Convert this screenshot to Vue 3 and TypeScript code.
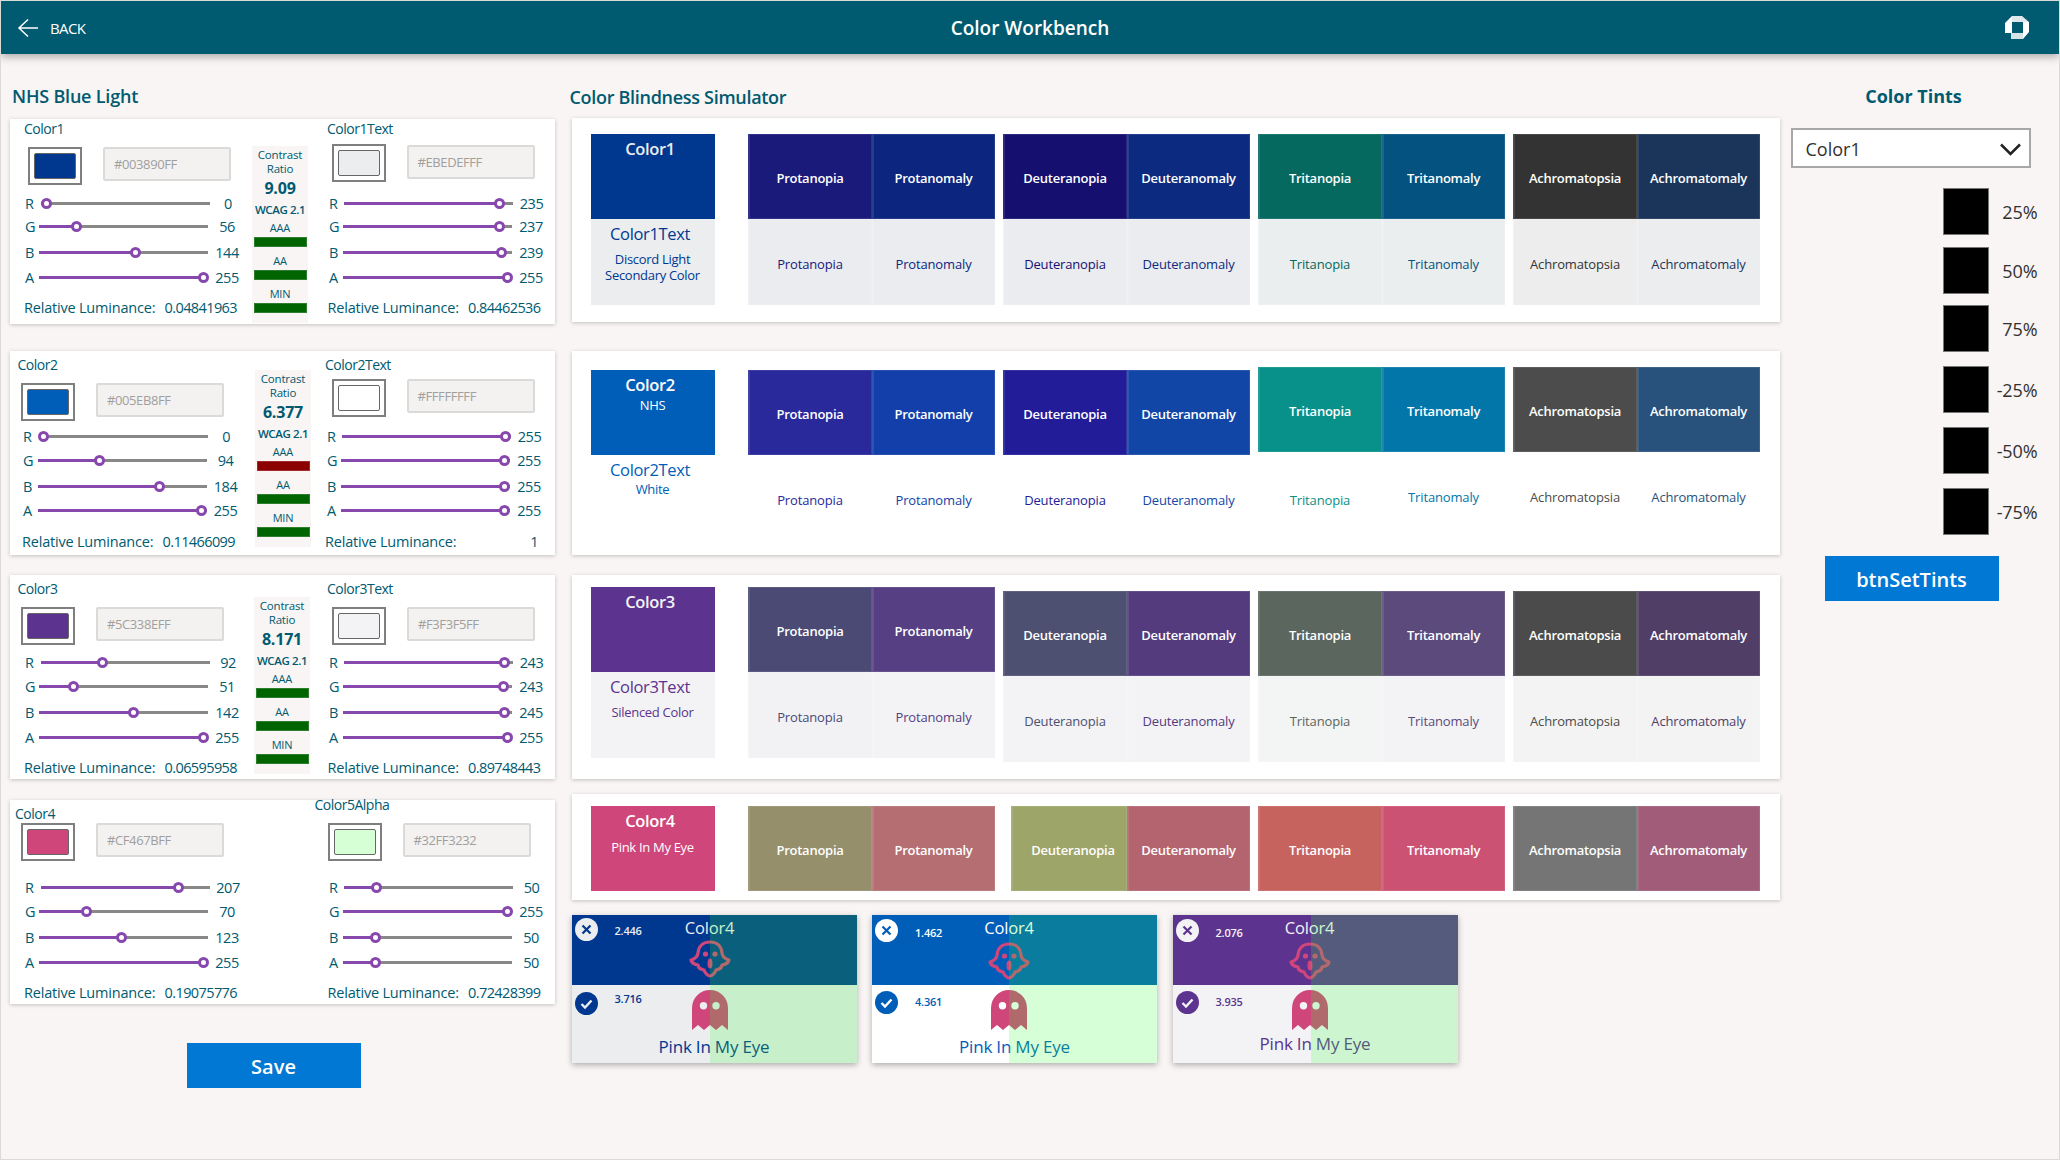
<script setup lang="ts">
interface Slider {
  l: string
  v: number
  t: number
}

interface Editor {
  cls: string
  name: string
  hex: string
  fill: string
  lum: string
  sliders: Slider[]
}

interface Contrast {
  cls: string
  ratio: string
  aaa: boolean
}

interface ColorCard {
  left: Editor
  right: Editor
  contrast?: Contrast
}

function sl(vals: number[], pos: number[]): Slider[] {
  return ['R', 'G', 'B', 'A'].map((l, i) => ({ l, v: vals[i], t: pos[i] }))
}

const colorCards: ColorCard[] = [
  {
    left: { cls: 'ed-1l', name: 'Color1', hex: '#003890FF', fill: '#003890', lum: '0.04841963', sliders: sl([0, 56, 144, 255], [5, 37, 96, 164.5]) },
    right: { cls: 'ed-1r', name: 'Color1Text', hex: '#EBEDEFFF', fill: '#ebedef', lum: '0.84462536', sliders: sl([235, 237, 239, 255], [155.5, 156.5, 158.5, 164]) },
    contrast: { cls: 'cr-1', ratio: '9.09', aaa: true }
  },
  {
    left: { cls: 'ed-2l', name: 'Color2', hex: '#005EB8FF', fill: '#005eb8', lum: '0.11466099', sliders: sl([0, 94, 184, 255], [4.5, 62, 122, 163.5]) },
    right: { cls: 'ed-2r', name: 'Color2Text', hex: '#FFFFFFFF', fill: '#ffffff', lum: '1', sliders: sl([255, 255, 255, 255], [163.5, 163.5, 163.5, 163.5]) },
    contrast: { cls: 'cr-2', ratio: '6.377', aaa: false }
  },
  {
    left: { cls: 'ed-3l', name: 'Color3', hex: '#5C338EFF', fill: '#5c338e', lum: '0.06595958', sliders: sl([92, 51, 142, 255], [61, 34, 94, 164.5]) },
    right: { cls: 'ed-3r', name: 'Color3Text', hex: '#F3F3F5FF', fill: '#f3f3f5', lum: '0.89748443', sliders: sl([243, 243, 245, 255], [160.5, 160.5, 161.5, 164]) },
    contrast: { cls: 'cr-3', ratio: '8.171', aaa: true }
  },
  {
    left: { cls: 'ed-4l', name: 'Color4', hex: '#CF467BFF', fill: '#cf467b', lum: '0.19075776', sliders: sl([207, 70, 123, 255], [137, 47, 82, 164.5]) },
    right: { cls: 'ed-4r', name: 'Color5Alpha', hex: '#32FF3232', fill: '#d6ffd6', lum: '0.72428399', sliders: sl([50, 255, 50, 50], [32, 164, 32, 32]) }
  }
]

interface SimGroup {
  names: [string, string]
  top: [string, string]
  bottom?: [string, string]
  cls?: string
  shiftFirst?: boolean
}

interface SimRow {
  cls: string
  title: string
  titleBg: string
  titleColor: string
  titleSub?: string
  sub?: string
  lower?: string
  lowerColor?: string
  tight?: boolean
  groups: SimGroup[]
}

const N1: [string, string] = ['Protanopia', 'Protanomaly']
const N2: [string, string] = ['Deuteranopia', 'Deuteranomaly']
const N3: [string, string] = ['Tritanopia', 'Tritanomaly']
const N4: [string, string] = ['Achromatopsia', 'Achromatomaly']

const simRows: SimRow[] = [
  {
    cls: 'sim-1', title: 'Color1', titleBg: '#003890', titleColor: '#ebedef',
    lower: 'Color1Text', lowerColor: '#ebedef', sub: 'Discord Light Secondary Color',
    groups: [
      { names: N1, top: ['#1a1a7a', '#0c2680'], bottom: ['#ebecef', '#ebecef'] },
      { names: N2, top: ['#15106f', '#0c2b80'], bottom: ['#ebecef', '#ebecef'] },
      { names: N3, top: ['#056960', '#045280'], bottom: ['#ebeeef', '#ebeeef'] },
      { names: N4, top: ['#333333', '#1b345a'], bottom: ['#ededed', '#ecedee'] }
    ]
  },
  {
    cls: 'sim-2', title: 'Color2', titleSub: 'NHS', titleBg: '#005eb8', titleColor: '#ffffff',
    lower: 'Color2Text', lowerColor: '#ffffff', sub: 'White', tight: true,
    groups: [
      { cls: 'g-down3', names: N1, top: ['#29299b', '#123fa9'], bottom: ['#ffffff', '#ffffff'] },
      { cls: 'g-down3', names: N2, top: ['#221c98', '#1146a6'], bottom: ['#ffffff', '#ffffff'] },
      { names: N3, top: ['#08908a', '#0276a8'], bottom: ['#ffffff', '#ffffff'], shiftFirst: true },
      { names: N4, top: ['#4c4c4c', '#28527b'], bottom: ['#ffffff', '#ffffff'] }
    ]
  },
  {
    cls: 'sim-3', title: 'Color3', titleBg: '#5c338e', titleColor: '#f3f3f5',
    lower: 'Color3Text', lowerColor: '#f3f3f5', sub: 'Silenced Color',
    groups: [
      { names: N1, top: ['#4a4a75', '#563f82'], bottom: ['#f2f2f5', '#f3f3f5'] },
      { cls: 'g-down4', names: N2, top: ['#4d5070', '#533b7e'], bottom: ['#f3f3f5', '#f3f3f5'] },
      { cls: 'g-down4', names: N3, top: ['#5b665f', '#5c4a7c'], bottom: ['#f3f4f4', '#f3f3f5'] },
      { cls: 'g-down4', names: N4, top: ['#4b4b4b', '#503e66'], bottom: ['#f3f3f3', '#f3f3f4'] }
    ]
  },
  {
    cls: 'sim-4', title: 'Color4', titleSub: 'Pink In My Eye', titleBg: '#cf467b', titleColor: '#ffffff',
    groups: [
      { names: N1, top: ['#968f6b', '#b56f72'] },
      { cls: 'g-narrow', names: N2, top: ['#9ea569', '#b4646f'] },
      { names: N3, top: ['#c7635f', '#cc5273'] },
      { names: N4, top: ['#757575', '#a05c78'] }
    ]
  }
]

const tiles = [
  { cls: 'tile-1', top: '#003890', bottom: '#ebedef', fail: '2.446', pass: '3.716' },
  { cls: 'tile-2', top: '#005eb8', bottom: '#ffffff', fail: '1.462', pass: '4.361' },
  { cls: 'tile-3', top: '#5c338e', bottom: '#f3f3f5', fail: '2.076', pass: '3.935' }
]

const tints = ['25%', '50%', '75%', '-25%', '-50%', '-75%']
const wcagLevels = ['AAA', 'AA', 'MIN']
</script>

<template>
  <div class="app">
    <header class="topbar">
      <div class="back">
        <svg width="22" height="20" viewBox="0 0 22 20" fill="none" stroke="#fff" stroke-width="1.5">
          <path d="M21 10H2M11 1.5 2 10l9 8.5" />
        </svg>
        <span>BACK</span>
      </div>
      <div class="topbar-title">Color Workbench</div>
      <div class="topbar-end">
        <svg width="24" height="23" viewBox="0 0 24 23">
          <polygon points="0,7 7,0 7,17 0,17" fill="#fff" />
          <polygon points="7,0 17,0 24,6 7,6" fill="#dfe9ec" />
          <polygon points="18,6 24,6 24,16 18,23" fill="#fff" />
          <polygon points="6,17 18,17 18,23 6,23" fill="#d5e2e6" />
        </svg>
      </div>
    </header>

    <main class="body">
      <section class="col-left">
        <h2 class="heading">NHS Blue Light</h2>
        <div v-for="card in colorCards" :key="card.left.name" class="color-card">
          <template v-for="(ed, i) in [card.left, card.right]" :key="ed.name">
            <div v-if="i === 1" class="contrast" :class="card.contrast?.cls">
              <template v-if="card.contrast">
                <div class="cr-head">Contrast<br />Ratio</div>
                <div class="cr-num">{{ card.contrast.ratio }}</div>
                <div class="cr-wcag">WCAG 2.1</div>
                <template v-for="level in wcagLevels" :key="level">
                  <div class="cr-level">{{ level }}</div>
                  <div class="cr-bar" :class="{ 'cr-bar--fail': level === 'AAA' && !card.contrast.aaa }"></div>
                </template>
              </template>
            </div>
            <div class="editor" :class="ed.cls">
              <div class="ed-label">{{ ed.name }}</div>
              <div class="ed-top">
                <div class="swatch">
                  <div class="swatch-fill" :style="{ background: ed.fill }"></div>
                </div>
                <div class="hex">{{ ed.hex }}</div>
              </div>
              <div class="ed-rows">
                <div v-for="s in ed.sliders" :key="s.l" class="row">
                  <span class="row-letter">{{ s.l }}</span>
                  <div class="track">
                    <div class="track-fill" :style="{ width: s.t + 'px' }"></div>
                    <div class="thumb" :style="{ left: s.t + 'px' }"></div>
                  </div>
                  <span class="row-val">{{ s.v }}</span>
                </div>
              </div>
              <div class="lum">
                <span class="lum-label">Relative Luminance:</span>
                <span class="lum-val">{{ ed.lum }}</span>
              </div>
            </div>
          </template>
        </div>
        <button class="btn btn-save">Save</button>
      </section>

      <section class="col-mid">
        <h2 class="heading heading-mid">Color Blindness Simulator</h2>
        <div v-for="row in simRows" :key="row.title" class="sim-card" :class="row.cls">
          <div class="name-block g-first" :class="{ tight: row.tight }">
            <div class="name-top" :style="{ background: row.titleBg, color: row.titleColor }">
              <div class="name-title">{{ row.title }}</div>
              <div v-if="row.titleSub" class="name-sub name-sub--top">{{ row.titleSub }}</div>
            </div>
            <div v-if="row.lower" class="name-bottom" :style="{ background: row.lowerColor, color: row.titleBg }">
              <div class="name-title">{{ row.lower }}</div>
              <div class="name-sub name-sub--bottom">{{ row.sub }}</div>
            </div>
          </div>
          <div class="groups">
            <div v-for="g in row.groups" :key="g.names[0]" class="group" :class="g.cls">
              <div
                v-for="(n, i) in g.names"
                :key="n"
                class="cell cell-top"
                :style="{ background: g.top[i] }"
              >{{ n }}</div>
              <template v-if="g.bottom">
                <div
                  v-for="(n, i) in g.names"
                  :key="n + 'b'"
                  class="cell cell-bottom"
                  :class="{ 'cell--shift': g.shiftFirst && i === 0 }"
                  :style="{ background: g.bottom[i], color: g.top[i] }"
                >{{ n }}</div>
              </template>
            </div>
          </div>
        </div>

        <div class="tiles">
          <div v-for="t in tiles" :key="t.cls" class="tile" :class="t.cls">
            <div class="tile-half tile-top" :style="{ background: t.top, color: t.bottom }">
              <div class="tile-side">
                <svg class="mark" width="23" height="23" viewBox="0 0 23 23" fill="none">
                  <circle cx="11.5" cy="11.5" r="11.5" :fill="t.bottom" />
                  <path d="M7.5 7.5l8 8M15.5 7.5l-8 8" :stroke="t.top" stroke-width="2.2" />
                </svg>
                <span class="tile-num">{{ t.fail }}</span>
              </div>
              <div class="tile-mid">
                <div class="tile-name">Color4</div>
                <svg class="ghost-line" width="42" height="38" viewBox="0 0 42 38" fill="none">
                  <path
                    d="M21 2C13 2 9.5 7 9 13c-.4 4-3.5 6-7 7 1 4 4.5 4.5 7 5 .3 3.5 3.5 4.5 6 5 1 3 4 6 6 6s5-3 6-6c2.5-.5 5.7-1.5 6-5 2.5-.5 6-1 7-5-3.5-1-6.6-3-7-7-.5-6-4-11-12-11Z"
                    stroke="#cf467b"
                    stroke-width="3.2"
                    stroke-linejoin="round"
                  />
                  <circle cx="16.5" cy="14" r="2.6" fill="#cf467b" />
                  <circle cx="26" cy="14" r="2.6" fill="#cf467b" />
                  <ellipse cx="21" cy="23.5" rx="2.5" ry="5" fill="#cf467b" />
                </svg>
              </div>
            </div>
            <div class="tile-half tile-bottom" :style="{ background: t.bottom, color: t.top }">
              <div class="tile-side">
                <svg class="mark" width="23" height="23" viewBox="0 0 23 23" fill="none">
                  <circle cx="11.5" cy="11.5" r="11.5" :fill="t.top" />
                  <path d="M6.5 12l3.5 3.5 6.5-7" :stroke="t.bottom" stroke-width="2.4" />
                </svg>
                <span class="tile-num">{{ t.pass }}</span>
              </div>
              <div class="tile-mid">
                <svg class="ghost-solid" width="36" height="40" viewBox="0 0 36 40">
                  <path
                    fill-rule="evenodd"
                    fill="#cf467b"
                    d="M0 18a18 18 0 0 1 36 0v22l-6-5-6 5-6-5-6 5-6-5-6 5ZM11.5 12a3.7 3.7 0 1 0 0 7.4 3.7 3.7 0 0 0 0-7.4ZM24 12a3.7 3.7 0 1 0 0 7.4A3.7 3.7 0 0 0 24 12Z"
                  />
                </svg>
              </div>
              <div class="tile-caption">Pink In My Eye</div>
            </div>
            <div class="tile-veil"></div>
          </div>
        </div>
      </section>

      <aside class="col-right">
        <h2 class="heading heading-tints">Color Tints</h2>
        <div class="dropdown">
          <span>Color1</span>
          <svg width="21" height="13" viewBox="0 0 21 13" fill="none" stroke="#222" stroke-width="2.5">
            <path d="M1 1.5 10.5 11 20 1.5" />
          </svg>
        </div>
        <div class="tint-list">
          <div v-for="t in tints" :key="t" class="tint">
            <div class="tint-box"></div>
            <span class="tint-label">{{ t }}</span>
          </div>
        </div>
        <button class="btn btn-tints">btnSetTints</button>
      </aside>
    </main>
  </div>
</template>

<style scoped>
.app {
  width: 2060px;
  height: 1160px;
  box-sizing: border-box;
  border: 1px solid #dcdad8;
  background: #f8f5f4;
  font-family: "Open Sans", "Noto Sans", sans-serif;
  color: #005a70;
  overflow: hidden;
}

.topbar {
  height: 53px;
  background: #005a70;
  box-shadow: 0 3px 8px rgba(0, 0, 0, 0.3);
  display: grid;
  grid-template-columns: 1fr auto 1fr;
  align-items: center;
  color: #fff;
  position: relative;
}

.back {
  display: flex;
  align-items: center;
  gap: 11px;
  padding-left: 16px;
  font-size: 15px;
  letter-spacing: -0.6px;
}

.topbar-title {
  font-size: 19px;
  font-weight: 600;
}

.topbar-end {
  display: flex;
  justify-content: flex-end;
  padding-right: 30px;
}

.body {
  display: flex;
  align-items: flex-start;
}

.heading {
  margin: 0;
  font-size: 18px;
  line-height: 24px;
  font-weight: 600;
  color: #005a70;
  letter-spacing: -0.3px;
}

.col-left {
  width: 545px;
  margin-left: 9px;
  padding-top: 30px;
}

.col-left .heading {
  padding-left: 2px;
  margin-bottom: 11px;
  letter-spacing: -0.2px;
}

.color-card {
  display: flex;
  height: 204px;
  background: #fff;
  box-shadow: 0 1px 4px rgba(0, 0, 0, 0.22);
  margin-bottom: 20px;
}

.color-card:nth-of-type(1) {
  height: 205px;
  margin-bottom: 27px;
}

.color-card:nth-of-type(3) {
  margin-bottom: 21px;
}

/* per editor offsets: the original canvas is not quite aligned */
.editor {
  --lx: 14px;
  --ly: 14px;
  --sx: 11px;
  --sy: 32px;
  --hex-gap: 21px;
  --hex-dy: 0px;
  --rx: 15px;
  --tx: 29px;
  --tx1: 31px;
  --vx: 216px;
  --r1: 87px;
  --g2: 24px;
  --g4: 25px;
  --lumy: 193px;
  --r4: 162px;
  --lumx: 14px;
  position: relative;
  display: flex;
  flex-direction: column;
  width: 242px;
}

.ed-1r,
.ed-2r,
.ed-3r,
.ed-4r {
  width: 247px;
}

.ed-1l {
  --ly: 10px;
  --sx: 18px;
  --sy: 28px;
  --r1: 84px;
  --g2: 23px;
  --r4: 158px;
  --lumy: 189px;
}

.ed-1r {
  --lx: 19px;
  --ly: 10px;
  --sx: 23.5px;
  --sy: 25px;
  --hex-dy: 1px;
  --rx: 21px;
  --tx: 35px;
  --tx1: 36px;
  --vx: 222px;
  --r1: 84px;
  --g2: 23px;
  --r4: 158px;
  --lumy: 189px;
  --lumx: 19.5px;
}

.ed-2l {
  --lx: 7.5px;
  --rx: 13px;
  --tx: 27.5px;
  --tx1: 29px;
  --vx: 214.5px;
  --r1: 85px;
  --g4: 24px;
  --r4: 159px;
  --lumy: 191px;
  --lumx: 12px;
}

.ed-2r {
  --lx: 17px;
  --sx: 23.5px;
  --sy: 28px;
  --rx: 19px;
  --tx: 33px;
  --tx1: 34px;
  --vx: 220px;
  --r1: 85px;
  --g4: 24px;
  --r4: 159px;
  --lumy: 191px;
  --lumx: 17px;
}

.ed-3l {
  --lx: 7.5px;
}

.ed-3r {
  --lx: 19px;
  --sx: 24px;
  --rx: 21px;
  --tx: 35px;
  --tx1: 36px;
  --vx: 222px;
  --lumx: 19.5px;
}

.ed-4l {
  --lx: 5px;
  --sy: 23px;
}

.ed-4r {
  --lx: 6.5px;
  --ly: 5px;
  --sx: 19.5px;
  --sy: 23px;
  --rx: 21px;
  --tx: 35px;
  --tx1: 36px;
  --vx: 222px;
  --lumx: 19.5px;
}

.ed-label {
  height: 20px;
  line-height: 20px;
  font-size: 14px;
  letter-spacing: -0.5px;
  margin-left: var(--lx);
  margin-top: calc(var(--ly) - 10px);
}

.ed-top {
  display: flex;
  align-items: flex-start;
  height: 38px;
  margin-left: var(--sx);
  margin-top: calc(var(--sy) - var(--ly) - 10px);
}

.swatch {
  width: 54px;
  height: 38px;
  box-sizing: border-box;
  border: 2px solid #7f7f7f;
  padding: 4px;
  background: #fff;
  flex: none;
}

.swatch-fill {
  width: 100%;
  height: 100%;
  box-sizing: border-box;
  border: 1px solid #666;
  border-radius: 2px;
}

.hex {
  width: 128px;
  height: 34px;
  box-sizing: border-box;
  margin-left: var(--hex-gap);
  margin-top: var(--hex-dy);
  padding-left: 9px;
  border: 2px solid #dcdad8;
  border-radius: 2px;
  background: #f3f2f1;
  color: #a19f9d;
  font-size: 13px;
  line-height: 30px;
  letter-spacing: -0.4px;
}

.ed-rows {
  margin-top: calc(var(--r1) - 10px - var(--sy) - 38px);
}

.row {
  --rowtx: var(--tx);
  display: grid;
  grid-template-columns: var(--rowtx) 169px 40px;
  align-items: center;
  height: 20px;
  font-size: 14.5px;
}

.row:nth-child(1) {
  --rowtx: var(--tx1);
}

.row:nth-child(2) {
  margin-top: calc(var(--g2) - 20px);
}

.row:nth-child(3) {
  margin-top: 6px;
}

.row:nth-child(4) {
  margin-top: calc(var(--g4) - 20px);
}

.row-letter {
  padding-left: var(--rx);
}

.row-val {
  margin-left: calc(var(--vx) - var(--rowtx) - 169px - 20px);
  text-align: center;
  letter-spacing: -0.5px;
}

.track {
  position: relative;
  height: 3px;
  background: #8a8886;
}

.track-fill {
  position: absolute;
  left: 0;
  top: 0;
  bottom: 0;
  background: #8748ad;
}

.thumb {
  position: absolute;
  top: 50%;
  width: 11px;
  height: 11px;
  box-sizing: border-box;
  margin: -5.5px 0 0 -5.5px;
  border: 3px solid #8748ad;
  border-radius: 50%;
  background: #fff;
}

.lum {
  display: flex;
  justify-content: space-between;
  width: 213px;
  height: 20px;
  line-height: 20px;
  font-size: 14.5px;
  margin-left: var(--lumx);
  margin-top: calc(var(--lumy) - var(--r4) - 20px);
}

.lum-label {
  letter-spacing: -0.2px;
}

.lum-val {
  letter-spacing: -0.6px;
}

.contrast {
  --cx: 0px;
  flex: none;
  width: 56px;
  height: 177px;
  box-sizing: border-box;
  padding-top: 2px;
  background: #f8f5f4;
  text-align: center;
  margin-left: var(--cx);
  margin-right: calc(var(--cx) * -1);
  visibility: hidden;
}

.cr-1,
.cr-2,
.cr-3 {
  visibility: visible;
}

.cr-1 {
  margin-top: 27px;
}

.cr-2 {
  --cx: 3px;
  margin-top: 19px;
}

.cr-3 {
  --cx: 2px;
  margin-top: 22px;
}

.cr-head {
  font-size: 11.5px;
  line-height: 14px;
  letter-spacing: -0.2px;
}

.cr-num {
  margin-top: 2px;
  font-size: 16px;
  line-height: 21px;
  font-weight: 700;
  letter-spacing: -0.2px;
}

.cr-wcag {
  margin-top: 3px;
  font-size: 11.5px;
  line-height: 16px;
  font-weight: 600;
  letter-spacing: -0.4px;
  white-space: nowrap;
}

.cr-level {
  margin-top: 7px;
  font-size: 11px;
  line-height: 14px;
  letter-spacing: -0.2px;
}

.cr-wcag + .cr-level {
  margin-top: 3px;
}

.cr-bar {
  width: 53px;
  height: 10px;
  margin: 2px 0 0 2px;
  box-sizing: border-box;
  border: 1px solid #2f7d2f;
  background: #006400;
}

.cr-bar--fail {
  border-color: #a52a2a;
  background: #8b0000;
}

.btn {
  display: block;
  width: 174px;
  height: 45px;
  padding: 2px 0 0;
  border: 0;
  background: #0078d4;
  color: #fff;
  font-family: inherit;
  font-size: 20px;
  font-weight: 600;
}

.btn-save {
  margin: 39px 0 0 176.5px;
}

.col-mid {
  width: 1208px;
  margin-left: 16.5px;
  padding-top: 31px;
}

.heading-mid {
  margin-bottom: 9px;
  margin-left: -2px;
}

.sim-card {
  display: flex;
  box-sizing: border-box;
  height: 204px;
  padding-left: 19px;
  background: #fff;
  box-shadow: 0 1px 4px rgba(0, 0, 0, 0.22);
  margin-bottom: 20px;
}

.sim-1 {
  padding-top: 16px;
  margin-bottom: 29px;
}

.sim-2 {
  padding-top: 16px;
}

.sim-2 .g-first {
  margin-top: 3px;
}

.sim-3 {
  padding-top: 12px;
  margin-bottom: 15px;
}

.sim-4 {
  height: 106px;
  padding-top: 12px;
  margin-bottom: 15px;
}

.name-block {
  width: 124px;
  flex: none;
  margin-right: 33px;
  text-align: center;
}

.name-top {
  height: 85px;
  box-sizing: border-box;
  padding-top: 5px;
}

.name-bottom {
  height: 86px;
  box-sizing: border-box;
  padding-top: 5px;
}

.name-title {
  font-size: 16.5px;
  line-height: 20px;
  font-weight: 600;
  padding-right: 5px;
  letter-spacing: -0.35px;
}

.name-bottom .name-title {
  font-weight: 400;
}

.name-sub {
  font-size: 13px;
  line-height: 16px;
  letter-spacing: -0.3px;
}

.name-sub--top {
  margin-top: 8px;
}

.name-sub--bottom {
  margin-top: 7px;
  padding: 0 10px;
}

.tight .name-sub--top {
  margin-top: 2px;
}

.tight .name-sub--bottom {
  margin-top: 1px;
}

.groups {
  display: flex;
  gap: 8px;
}

.group {
  display: grid;
  grid-template-columns: 124px 123px;
  grid-auto-rows: min-content;
}

.g-down3 {
  margin-top: 3px;
}

.g-down4 {
  margin-top: 4px;
}

.g-narrow {
  margin-left: 8px;
  grid-template-columns: 116px 123px;
}

.g-narrow .cell:first-child {
  padding-left: 8px;
}

.cell {
  display: flex;
  align-items: center;
  justify-content: center;
  box-sizing: border-box;
  padding-top: 4px;
  font-size: 13px;
  letter-spacing: -0.25px;
  white-space: nowrap;
  border-left: 1px solid rgba(255, 255, 255, 0.12);
  box-shadow: inset 0 0 0 1px rgba(255, 255, 255, 0.1);
}

.cell-top {
  height: 85px;
  padding-top: 3px;
  color: #fff;
  font-weight: 600;
}

.cell-bottom {
  height: 86px;
  font-weight: 500;
  letter-spacing: -0.15px;
  border-left-color: rgba(255, 255, 255, 0.3);
}

.cell--shift {
  padding-top: 10px;
}

.tiles {
  display: flex;
  gap: 15.5px;
}

.tile {
  --mid: 107px;
  --veil: 137px;
  --numy-top: 15px;
  --marky-top: 4px;
  --numy-bottom: 10px;
  --marky-bottom: 6px;
  --ghosty: 3px;
  --cap: 1px;
  position: relative;
  width: 285px;
  height: 148px;
  box-shadow: 0 2px 6px rgba(0, 0, 0, 0.3);
}

.tile-1 {
  --mid: 108px;
  --veil: 138.5px;
  --numy-top: 13px;
  --marky-top: 3px;
  --numy-bottom: 7px;
  --ghosty: 1px;
  --marky-bottom: 7px;
}

.tile-3 {
  --veil: 138px;
  --cap: -6px;
}

.tile-half {
  display: grid;
  grid-template-columns: var(--mid) 60px 1fr;
}

.tile-top {
  height: 70px;
}

.tile-bottom {
  height: 78px;
}

.tile-side {
  display: flex;
  align-items: flex-start;
  padding-left: 3px;
}

.mark {
  flex: none;
}

.tile-top .mark {
  margin-top: var(--marky-top);
}

.tile-bottom .mark {
  margin-top: var(--marky-bottom);
}

.tile-num {
  margin-left: 17px;
  font-size: 11px;
  line-height: 14px;
  font-weight: 600;
  letter-spacing: -0.2px;
}

.tile-top .tile-num {
  margin-top: calc(var(--numy-top) - 4px);
}

.tile-bottom .tile-num {
  margin-top: var(--numy-bottom);
}

.tile-mid {
  display: flex;
  flex-direction: column;
  align-items: center;
}

.tile-name {
  margin-top: 2px;
  font-size: 16.5px;
  line-height: 22px;
  letter-spacing: -0.2px;
}

.ghost-line {
  margin-top: var(--ghosty);
}

.ghost-solid {
  margin-top: 5px;
}

.tile-caption {
  grid-column: 1 / -1;
  margin-top: var(--cap);
  text-align: center;
  font-size: 17px;
  line-height: 22px;
  letter-spacing: -0.2px;
}

.tile-veil {
  position: absolute;
  left: var(--veil);
  right: 0;
  top: 0;
  bottom: 0;
  background: rgba(50, 255, 50, 0.196);
}

.col-right {
  width: 250px;
  margin-left: 11px;
  padding-top: 30px;
}

.heading-tints {
  width: 240px;
  text-align: center;
  margin-bottom: 20px;
  padding-left: 6px;
  box-sizing: border-box;
  font-size: 18px;
  font-weight: 700;
  letter-spacing: 0;
}

.dropdown {
  display: flex;
  align-items: center;
  justify-content: space-between;
  box-sizing: border-box;
  width: 240px;
  height: 40px;
  padding: 2px 8px 0 13px;
  border: 2px solid #a8a8a8;
  background: #fff;
  color: #323130;
  font-size: 18px;
}

.tint-list {
  padding-top: 20px;
}

.tint {
  display: flex;
  align-items: center;
  margin-top: 12px;
}

.tint:first-child {
  margin-top: 0;
}

.tint:nth-child(3) {
  margin-top: 11px;
}

.tint:nth-child(4),
.tint:nth-child(5),
.tint:nth-child(6) {
  margin-top: 14px;
}

.tint-box {
  width: 46px;
  height: 47px;
  box-sizing: border-box;
  margin-left: 152px;
  background: #000;
  border: 1px solid #777;
  flex: none;
}

.tint-label {
  width: 49px;
  text-align: right;
  font-size: 18px;
  color: #323130;
  letter-spacing: -0.1px;
}

.btn-tints {
  margin: 21px 0 0 34px;
}
</style>

<style>
html,
body {
  margin: 0;
  background: #f8f5f4;
}
</style>
